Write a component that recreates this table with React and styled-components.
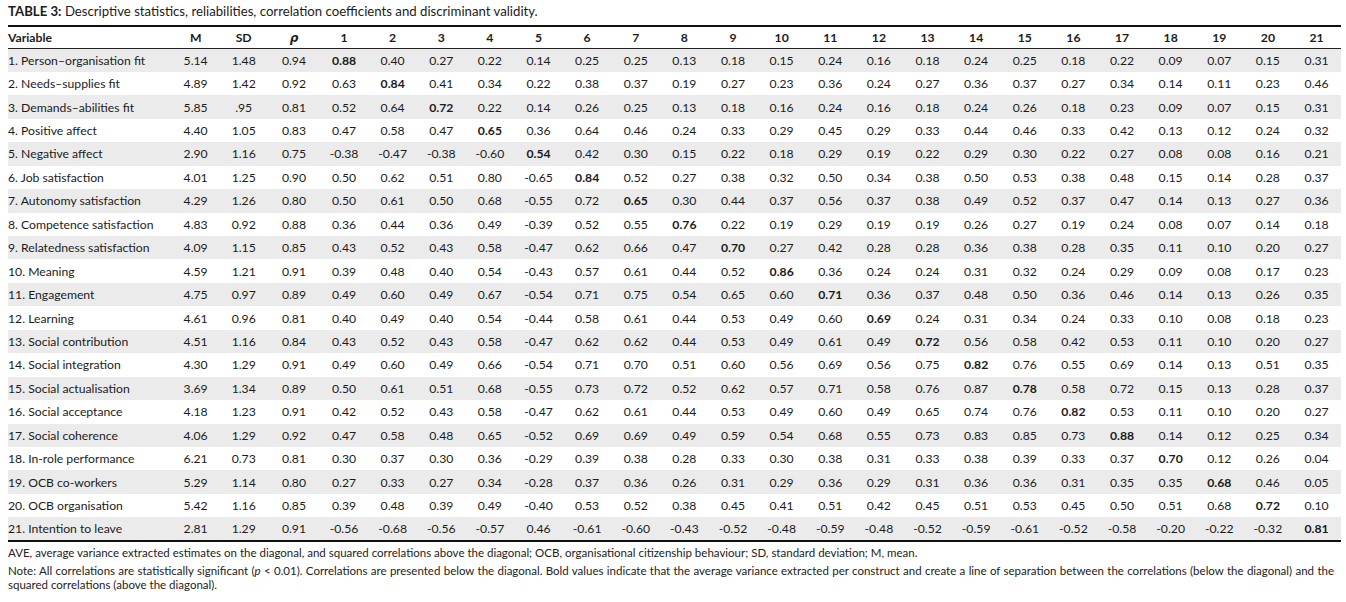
import React from 'react'
import styled, { createGlobalStyle } from 'styled-components'

const GlobalStyle = createGlobalStyle`
  body {
    margin: 0;
    padding: 4px 8px 0 8px;
    background: #fff;
    font-family: Lato, "Open Sans", "Liberation Sans", sans-serif;
    color: #1c1c1c;
  }
`

const rows = [
  ['Person–organisation fit', '5.14', '1.48', '0.94', '0.88 0.40 0.27 0.22 0.14 0.25 0.25 0.13 0.18 0.15 0.24 0.16 0.18 0.24 0.25 0.18 0.22 0.09 0.07 0.15 0.31'],
  ['Needs–supplies fit', '4.89', '1.42', '0.92', '0.63 0.84 0.41 0.34 0.22 0.38 0.37 0.19 0.27 0.23 0.36 0.24 0.27 0.36 0.37 0.27 0.34 0.14 0.11 0.23 0.46'],
  ['Demands–abilities fit', '5.85', '.95', '0.81', '0.52 0.64 0.72 0.22 0.14 0.26 0.25 0.13 0.18 0.16 0.24 0.16 0.18 0.24 0.26 0.18 0.23 0.09 0.07 0.15 0.31'],
  ['Positive affect', '4.40', '1.05', '0.83', '0.47 0.58 0.47 0.65 0.36 0.64 0.46 0.24 0.33 0.29 0.45 0.29 0.33 0.44 0.46 0.33 0.42 0.13 0.12 0.24 0.32'],
  ['Negative affect', '2.90', '1.16', '0.75', '-0.38 -0.47 -0.38 -0.60 0.54 0.42 0.30 0.15 0.22 0.18 0.29 0.19 0.22 0.29 0.30 0.22 0.27 0.08 0.08 0.16 0.21'],
  ['Job satisfaction', '4.01', '1.25', '0.90', '0.50 0.62 0.51 0.80 -0.65 0.84 0.52 0.27 0.38 0.32 0.50 0.34 0.38 0.50 0.53 0.38 0.48 0.15 0.14 0.28 0.37'],
  ['Autonomy satisfaction', '4.29', '1.26', '0.80', '0.50 0.61 0.50 0.68 -0.55 0.72 0.65 0.30 0.44 0.37 0.56 0.37 0.38 0.49 0.52 0.37 0.47 0.14 0.13 0.27 0.36'],
  ['Competence satisfaction', '4.83', '0.92', '0.88', '0.36 0.44 0.36 0.49 -0.39 0.52 0.55 0.76 0.22 0.19 0.29 0.19 0.19 0.26 0.27 0.19 0.24 0.08 0.07 0.14 0.18'],
  ['Relatedness satisfaction', '4.09', '1.15', '0.85', '0.43 0.52 0.43 0.58 -0.47 0.62 0.66 0.47 0.70 0.27 0.42 0.28 0.28 0.36 0.38 0.28 0.35 0.11 0.10 0.20 0.27'],
  ['Meaning', '4.59', '1.21', '0.91', '0.39 0.48 0.40 0.54 -0.43 0.57 0.61 0.44 0.52 0.86 0.36 0.24 0.24 0.31 0.32 0.24 0.29 0.09 0.08 0.17 0.23'],
  ['Engagement', '4.75', '0.97', '0.89', '0.49 0.60 0.49 0.67 -0.54 0.71 0.75 0.54 0.65 0.60 0.71 0.36 0.37 0.48 0.50 0.36 0.46 0.14 0.13 0.26 0.35'],
  ['Learning', '4.61', '0.96', '0.81', '0.40 0.49 0.40 0.54 -0.44 0.58 0.61 0.44 0.53 0.49 0.60 0.69 0.24 0.31 0.34 0.24 0.33 0.10 0.08 0.18 0.23'],
  ['Social contribution', '4.51', '1.16', '0.84', '0.43 0.52 0.43 0.58 -0.47 0.62 0.62 0.44 0.53 0.49 0.61 0.49 0.72 0.56 0.58 0.42 0.53 0.11 0.10 0.20 0.27'],
  ['Social integration', '4.30', '1.29', '0.91', '0.49 0.60 0.49 0.66 -0.54 0.71 0.70 0.51 0.60 0.56 0.69 0.56 0.75 0.82 0.76 0.55 0.69 0.14 0.13 0.51 0.35'],
  ['Social actualisation', '3.69', '1.34', '0.89', '0.50 0.61 0.51 0.68 -0.55 0.73 0.72 0.52 0.62 0.57 0.71 0.58 0.76 0.87 0.78 0.58 0.72 0.15 0.13 0.28 0.37'],
  ['Social acceptance', '4.18', '1.23', '0.91', '0.42 0.52 0.43 0.58 -0.47 0.62 0.61 0.44 0.53 0.49 0.60 0.49 0.65 0.74 0.76 0.82 0.53 0.11 0.10 0.20 0.27'],
  ['Social coherence', '4.06', '1.29', '0.92', '0.47 0.58 0.48 0.65 -0.52 0.69 0.69 0.49 0.59 0.54 0.68 0.55 0.73 0.83 0.85 0.73 0.88 0.14 0.12 0.25 0.34'],
  ['In-role performance', '6.21', '0.73', '0.81', '0.30 0.37 0.30 0.36 -0.29 0.39 0.38 0.28 0.33 0.30 0.38 0.31 0.33 0.38 0.39 0.33 0.37 0.70 0.12 0.26 0.04'],
  ['OCB co-workers', '5.29', '1.14', '0.80', '0.27 0.33 0.27 0.34 -0.28 0.37 0.36 0.26 0.31 0.29 0.36 0.29 0.31 0.36 0.36 0.31 0.35 0.35 0.68 0.46 0.05'],
  ['OCB organisation', '5.42', '1.16', '0.85', '0.39 0.48 0.39 0.49 -0.40 0.53 0.52 0.38 0.45 0.41 0.51 0.42 0.45 0.51 0.53 0.45 0.50 0.51 0.68 0.72 0.10'],
  ['Intention to leave', '2.81', '1.29', '0.91', '-0.56 -0.68 -0.56 -0.57 0.46 -0.61 -0.60 -0.43 -0.52 -0.48 -0.59 -0.48 -0.52 -0.59 -0.61 -0.52 -0.58 -0.20 -0.22 -0.32 0.81'],
]

const nums = Array.from({ length: 21 }, (_, i) => i + 1)

const App = () => {
  return (
    <>
      <GlobalStyle />
      <Caption>
        <b>TABLE 3:</b> Descriptive statistics, reliabilities, correlation coefficients and discriminant validity.
      </Caption>
      <Table>
        <colgroup>
          <col style={{ width: 164 }} />
          <col style={{ width: 47 }} />
          <col style={{ width: 49 }} />
          <col style={{ width: 51.5 }} />
          {nums.map((n) => (
            <col key={n} style={{ width: 48.6 }} />
          ))}
        </colgroup>
        <thead>
          <tr>
            <HeadCell $left>Variable</HeadCell>
            <HeadCell>M</HeadCell>
            <HeadCell>SD</HeadCell>
            <HeadCell><Rho>ρ</Rho></HeadCell>
            {nums.map((n) => (
              <HeadCell key={n}>{n}</HeadCell>
            ))}
          </tr>
        </thead>
        <tbody>
          {rows.map((r, i) => (
            <Row key={i} $shaded={i % 2 === 0}>
              <Cell $left>{i + 1}. {r[0]}</Cell>
              <Cell>{r[1]}</Cell>
              <Cell>{r[2]}</Cell>
              <Cell>{r[3]}</Cell>
              {r[4].split(' ').map((v, j) => (
                <Cell key={j} $bold={j === i}>{v}</Cell>
              ))}
            </Row>
          ))}
        </tbody>
      </Table>
      <Notes>
        <p>AVE, average variance extracted estimates on the diagonal, and squared correlations above the diagonal; OCB, organisational citizenship behaviour; SD, standard deviation; M, mean.</p>
        <p>
          Note: All correlations are statistically significant (<i>p</i> &lt; 0.01). Correlations are presented below the diagonal. Bold values indicate that the average variance extracted per construct and create a line of separation between the correlations (below the diagonal) and the squared correlations (above the diagonal).
        </p>
      </Notes>
    </>
  )
}

export default App

const Caption = styled.div`
  font-size: 13.2px;
  line-height: 15px;
  height: 21px;
  color: #1c1c1c;

  b {
    font-weight: 700;
  }
`

const Table = styled.table`
  width: 1333px;
  table-layout: fixed;
  border-collapse: collapse;
  border-top: 2.5px solid #111;
  border-bottom: 2.5px solid #111;
  font-size: 12.2px;
`

const HeadCell = styled.th`
  height: 21px;
  padding: 0;
  font-weight: 700;
  text-align: ${(p) => (p.$left ? 'left' : 'center')};
  border-bottom: 1px solid #222;
  vertical-align: middle;
`

const Rho = styled.span`
  font-family: "DejaVu Sans", sans-serif;
  font-style: italic;
  font-weight: 700;
  font-size: 12px;
`

const Row = styled.tr`
  background: ${(p) => (p.$shaded ? '#ebebeb' : '#fff')};
  height: 23.45px;
`

const Cell = styled.td`
  padding: 0;
  text-align: ${(p) => (p.$left ? 'left' : 'center')};
  font-weight: ${(p) => (p.$bold ? 700 : 400)};
  white-space: nowrap;
  vertical-align: middle;
`

const Notes = styled.div`
  width: 1326px;
  margin-top: 4px;
  font-size: 11.5px;
  line-height: 14px;
  color: #222;

  p {
    margin: 0 0 4px 0;
    text-align: justify;
  }
`
